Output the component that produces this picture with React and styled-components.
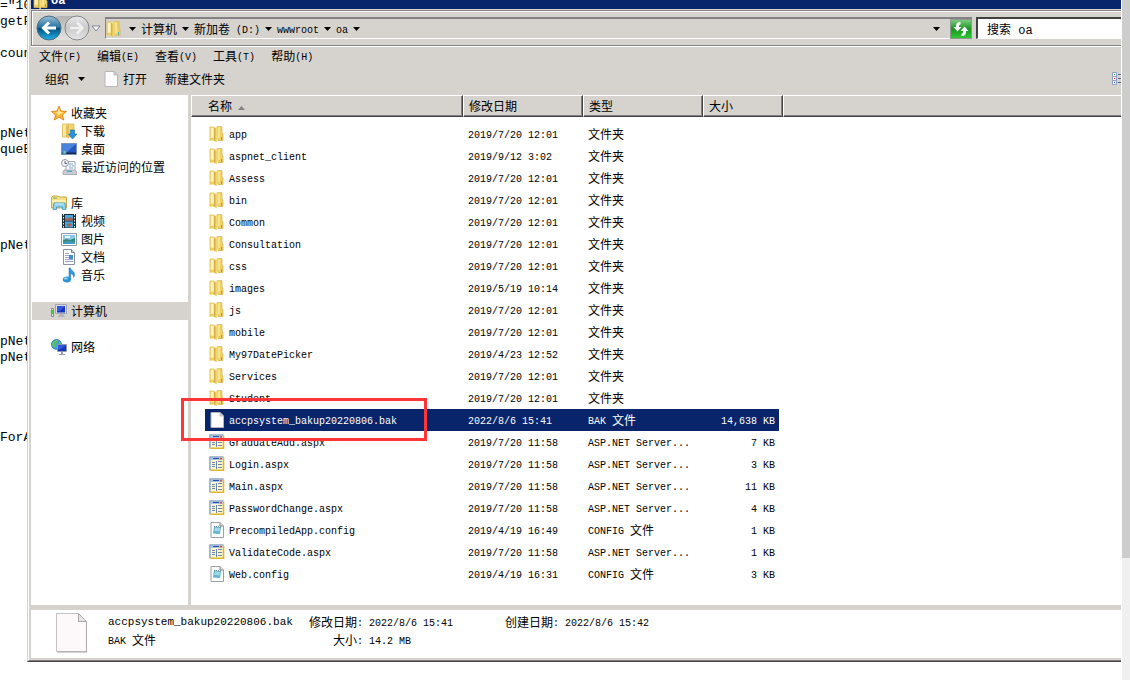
import React from 'react'
import styled, { createGlobalStyle } from 'styled-components';

const files = [
    {name: 'app', date: '2019/7/20 12:01', type: '文件夹', icon: 'folder'},
    {name: 'aspnet_client', date: '2019/9/12 3:02', type: '文件夹', icon: 'folder'},
    {name: 'Assess', date: '2019/7/20 12:01', type: '文件夹', icon: 'folder'},
    {name: 'bin', date: '2019/7/20 12:01', type: '文件夹', icon: 'folder'},
    {name: 'Common', date: '2019/7/20 12:01', type: '文件夹', icon: 'folder'},
    {name: 'Consultation', date: '2019/7/20 12:01', type: '文件夹', icon: 'folder'},
    {name: 'css', date: '2019/7/20 12:01', type: '文件夹', icon: 'folder'},
    {name: 'images', date: '2019/5/19 10:14', type: '文件夹', icon: 'folder'},
    {name: 'js', date: '2019/7/20 12:01', type: '文件夹', icon: 'folder'},
    {name: 'mobile', date: '2019/7/20 12:01', type: '文件夹', icon: 'folder'},
    {name: 'My97DatePicker', date: '2019/4/23 12:52', type: '文件夹', icon: 'folder'},
    {name: 'Services', date: '2019/7/20 12:01', type: '文件夹', icon: 'folder'},
    {name: 'Student', date: '2019/7/20 12:01', type: '文件夹', icon: 'folder'},
    {name: 'accpsystem_bakup20220806.bak', date: '2022/8/6 15:41', type: 'BAK 文件', size: '14,638 KB', icon: 'page', selected: true},
    {name: 'GraduateAdd.aspx', date: '2019/7/20 11:58', type: 'ASP.NET Server...', size: '7 KB', icon: 'aspx'},
    {name: 'Login.aspx', date: '2019/7/20 11:58', type: 'ASP.NET Server...', size: '3 KB', icon: 'aspx'},
    {name: 'Main.aspx', date: '2019/7/20 11:58', type: 'ASP.NET Server...', size: '11 KB', icon: 'aspx'},
    {name: 'PasswordChange.aspx', date: '2019/7/20 11:58', type: 'ASP.NET Server...', size: '4 KB', icon: 'aspx'},
    {name: 'PrecompiledApp.config', date: '2019/4/19 16:49', type: 'CONFIG 文件', size: '1 KB', icon: 'config'},
    {name: 'ValidateCode.aspx', date: '2019/7/20 11:58', type: 'ASP.NET Server...', size: '1 KB', icon: 'aspx'},
    {name: 'Web.config', date: '2019/4/19 16:31', type: 'CONFIG 文件', size: '3 KB', icon: 'config'},
];

const places = [
    [
        {label: '收藏夹', icon: 'star'},
        {label: '下载', icon: 'download', nested: true},
        {label: '桌面', icon: 'desktop', nested: true},
        {label: '最近访问的位置', icon: 'recent', nested: true},
    ],
    [
        {label: '库', icon: 'library'},
        {label: '视频', icon: 'video', nested: true},
        {label: '图片', icon: 'picture', nested: true},
        {label: '文档', icon: 'document', nested: true},
        {label: '音乐', icon: 'music', nested: true},
    ],
    [{label: '计算机', icon: 'computer', current: true}],
    [{label: '网络', icon: 'network'}],
];

const menus = ['文件(F)', '编辑(E)', '查看(V)', '工具(T)', '帮助(H)'];

const crumbs = ['计算机', '新加卷 (D:)', 'wwwroot', 'oa'];

// editor behind the window, one entry per 16px line
const codeLines = [
    '="10', 'getF', '', 'coun', '', '', '', '', 'pNet', 'queE', '', '', '', '', '',
    'pNet', '', '', '', '', '', 'pNet', 'pNet', '', '', '', '', 'ForA',
];

const drawings = {
    folder: (
        <>
            <path d="M1 1h6v13.500H1z" fill="#f8e794"/>
            <path d="M2 2h2v9H2z" fill="#fdf4bf"/>
            <path d="M1 12h5v2.500H1z" fill="#edcf6a"/>
            <path d="M7.500.5H13V7l1 1v6.500H7.500z" fill="#ecd068"/>
            <path d="M9 1h2v11H9z" fill="#f8e48e"/>
            <path d="M5 1.500 7.500 3v13L5 14.500z" fill="#d8ae42"/>
            <path d="M6.500 2 8.500 1v13l-1 2h-1z" fill="#f0d878"/>
            <path d="M1 14.500V1h4M8 .7h5V7l1 1v6.500H9" fill="none" stroke="#dcb850" strokeWidth=".8"/>
            <path d="M12 11h1v3h-1z" fill="#58b4a8"/>
        </>
    ),
    page: (
        <>
            <path d="M2 .5h9l3.500 3.500v11.500H2z" fill="#fffdfd" stroke="#b9b5b9"/>
            <path d="M11 .5V4h3.500z" fill="#dedade" stroke="#aaa6aa" strokeWidth=".7"/>
        </>
    ),
    aspx: (
        <>
            <path d="M1 1h14v13.500H1z" fill="#fff9cf"/>
            <path d="M1 14.500V1h13.500" fill="none" stroke="#8aa4cc" strokeWidth="1.500"/>
            <path d="M1.500 14.300h13V1.500" fill="none" stroke="#e0b62c" strokeWidth="1.600"/>
            <path d="M2 2h11.500v2H2z" fill="#a9c4ee"/>
            <path d="M4 2.500h6" stroke="#2450a8"/>
            <path d="M11 2h2v1.500h-2z" fill="#d55038"/>
            <path d="M3 6.500h3M3 8.500h3M3 10.500h3M9 5.500h4M9 8.500h4M9 11.500h4M7.500 5v8" stroke="#6d86ae"/>
        </>
    ),
    config: (
        <>
            <path d="M2 .5h9l3.500 3.500v11.500H2z" fill="#fff" stroke="#999fa3"/>
            <path d="M11 .5V4h3.500" fill="#ddd" stroke="#858a8d"/>
            <path d="m5 4.500 7 .5-1 7-7-.5z" fill="#63b5cf"/>
            <path d="m6 5.500 5 .3-.5 3.500-5-.3z" fill="#a1dae7"/>
            <path d="m5 4.500 7 .5" stroke="#557f8e" strokeDasharray="1 1"/>
        </>
    ),
    star: (
        <>
            <path d="m8 1 2 5 5.500.5-4 3.500 1.300 5L8 12.300 3.200 15l1.300-5-4-3.500L6 6z" fill="#fdb62e" stroke="#d87916" strokeWidth=".8"/>
            <path d="m8 3 1.300 4 3.500.5L9 9 8 11 6.500 8.500 3 7.500 6.700 7z" fill="#ffe793"/>
        </>
    ),
    download: (
        <>
            <path d="M1.500 1h6v13h-6z" fill="#fae99b" stroke="#d9b652" strokeWidth=".8"/>
            <path d="M7 1h6v13H7z" fill="#efd572" stroke="#d9b652" strokeWidth=".8"/>
            <path d="m5 2 3 1v12l-3-1z" fill="#e2bd55"/>
            <path d="M9.500 7h4v4H16l-4.500 5L7.500 11h2z" fill="#2891e3" stroke="#116bb5" strokeWidth=".6"/>
        </>
    ),
    desktop: (
        <>
            <path d="M.5 2.500h15v11H.5z" fill="#2458be" stroke="#7993bd"/>
            <path d="M1 3h14L6 11H1z" fill="#4a83dc"/>
            <path d="M1 11.500h14V13H1z" fill="#14264d"/>
            <circle cx="3.500" cy="11.500" r="2" fill="#36a9df"/>
            <path d="M3 10.500h1v1H3z" fill="#f7d34c"/>
        </>
    ),
    recent: (
        <>
            <path d="M5 2.500h9v10H5z" fill="#f8f9fb" stroke="#a6abb5"/>
            <path d="M8 5h4M8 7h2M11 7h2M8 9h4" stroke="#83a9d0"/>
            <path d="M3 11h11l2 2v2.500H2V13z" fill="#c8cbd1" stroke="#9599a3" strokeWidth=".7"/>
            <path d="M6 11.500h5V13H6z" fill="#4ea6d1"/>
            <circle cx="4" cy="4" r="3.500" fill="#f3f4f7" stroke="#9298a6"/>
            <path d="M4 2v2.500h2" fill="none" stroke="#5c6478"/>
        </>
    ),
    library: (
        <>
            <path d="M.5 2.500 2 1h5l1 1h7.500v11H.5z" fill="#f4df85" stroke="#cba947"/>
            <path d="M2 3h4" stroke="#68b860"/>
            <path d="M1 5h14v2H1z" fill="#fff2b1"/>
            <path d="M3 8h11l1 6.500h-3.500V12h-6v2.500H2z" fill="#91d3f3" stroke="#3b98ca" strokeWidth=".8"/>
            <path d="M4 9h9" stroke="#d3f1ff"/>
        </>
    ),
    video: (
        <>
            <path d="M1 1h14v14H1z" fill="#1d3037"/>
            <path d="M4 2h8v5.500H4zM4 8.500h8v6H4z" fill="#48a8dd"/>
            <path d="m4 5 3 .5 2-1.500 3 1.500v2H4zM6 11l3-1 2 2-3 2-2-1z" fill="#ad624d"/>
            <path d="M2.500 1v14M13.500 1v14" stroke="#eef4f4" strokeDasharray="1.500 1.500"/>
        </>
    ),
    picture: (
        <>
            <path d="M.5 2.500h15v12H.5z" fill="#fff" stroke="#8e9ba6"/>
            <path d="M2 4h12v9H2z" fill="#85c7ed"/>
            <path d="m2 9 4-1 3 1 5-2v6H2z" fill="#398777"/>
            <path d="m2 11 6-1 6 1v2H2z" fill="#3a9cc3"/>
            <path d="M4 6h5" stroke="#f2fbff" strokeWidth="2"/>
        </>
    ),
    document: (
        <>
            <path d="M2.500.5h8l3 3v12h-11z" fill="#fff" stroke="#8792a3"/>
            <path d="M10.500.5v3h3" fill="#d8dee6" stroke="#748096"/>
            <path d="M4 4.500h4M4 6.500h4M4 8.500h4M4 10.500h8M4 12.500h8" stroke="#9ba4d0"/>
            <path d="M8 6h4v4H8z" fill="#3f93c8"/>
        </>
    ),
    music: (
        <>
            <path d="M8 1h1.500c.5 3 4.500 3 4 7.500l-1 2c.2-3-1.500-3.500-3-4V13H8z" fill="#3098dc" stroke="#1971ad" strokeWidth=".5"/>
            <ellipse cx="5.800" cy="12.500" rx="4" ry="3" fill="#2b93d6"/>
            <ellipse cx="4.800" cy="11.500" rx="2" ry="1" fill="#9ad8f5"/>
        </>
    ),
    computer: (
        <>
            <path d="M4.500 1.500h11v9h-11z" fill="#d9dce3" stroke="#a1a4ae"/>
            <path d="M6 3h8v6.500H6z" fill="#1533bf"/>
            <path d="M6 3h8l-5 5H6z" fill="#3656dc"/>
            <path d="M9 11h3l2 3H7z" fill="#b0b3bc"/>
            <path d="M.5 5.500h2v8h-2z" fill="#e2e3e0" stroke="#8a8f89"/>
            <path d="M1 7h1v4H1z" fill="#4cc63c"/>
        </>
    ),
    network: (
        <>
            <circle cx="5.500" cy="5.500" r="5" fill="#3f9ee0" stroke="#1e6bae" strokeWidth=".7"/>
            <path d="M2 2.500 6 1l1 2-3 2 1 2-2 2-2-3zM8 2l2 2v3L7.500 6z" fill="#59c15f"/>
            <path d="M6.500 5.500h9v7h-9z" fill="#dadce3" stroke="#8f96ad"/>
            <path d="M7 6h8v6H7z" fill="#1635bb"/>
            <path d="M7 6h8l-5 4H7z" fill="#3656dc"/>
            <path d="M10 13h2v2h2v1H8v-1h2z" fill="#999db0"/>
        </>
    ),
};

// Latin runs are set in a half-width mono so that they keep step with the Chinese ones
function Txt({children}) {
    return (
        <Run>
            {children.split(/([\x20-\x7e]+)/).filter(Boolean).map((part, i) => (
                /^[\x20-\x7e]/.test(part) ? <Latin key={i}>{part}</Latin> : part
            ))}
        </Run>
    );
}

function Icon({name}) {
    return <IconSvg viewBox="0 0 16 16" aria-hidden="true">{drawings[name]}</IconSvg>;
}

function Arrow() {
    return (
        <ArrowSvg viewBox="0 0 7 4" aria-hidden="true">
            <path d="M0 0h7L3.500 4z"/>
        </ArrowSvg>
    );
}

function HistoryButtons() {
    return (
        <History>
            <HistoryTray/>
            <RoundButton aria-label="后退">
                <svg width="26" height="26" viewBox="0 0 26 26">
                    <defs>
                        <linearGradient id="back" x1="0" y1="0" x2="0" y2="1">
                            <stop offset="0" stopColor="#9cc0d6"/>
                            <stop offset=".48" stopColor="#24709f"/>
                            <stop offset=".52" stopColor="#04517f"/>
                            <stop offset="1" stopColor="#24b3ea"/>
                        </linearGradient>
                    </defs>
                    <circle cx="13" cy="13" r="12" fill="url(#back)" stroke="#4b6c80"/>
                    <path d="M20 13H8M13 7.500 7.500 13l5.500 5.500" fill="none" stroke="#fff" strokeWidth="3"/>
                </svg>
            </RoundButton>
            <RoundButton aria-label="前进">
                <svg width="26" height="26" viewBox="0 0 26 26">
                    <defs>
                        <linearGradient id="forward" x1="0" y1="0" x2="0" y2="1">
                            <stop offset="0" stopColor="#e9e9e9"/>
                            <stop offset=".5" stopColor="#c9c9c9"/>
                            <stop offset="1" stopColor="#e6e6e6"/>
                        </linearGradient>
                    </defs>
                    <circle cx="13" cy="13" r="12" fill="url(#forward)" stroke="#85878b"/>
                    <path d="M6 13h12M13 7.500l5.500 5.500-5.500 5.500" fill="none" stroke="#f0f0f0" strokeWidth="2.500"/>
                </svg>
            </RoundButton>
            <RecentButton aria-label="最近的页面">
                <svg width="10" height="7" viewBox="0 0 10 7">
                    <path d="M1 1h8L5 6z" fill="#fff" stroke="#7d8798"/>
                </svg>
            </RecentButton>
        </History>
    );
}

function App() {
    return (
        <Page>
            <GlobalStyle/>
            <Editor>
                {codeLines.map((line, i) => <CodeLine key={i}>{line}</CodeLine>)}
            </Editor>
            <Frame>
                <Explorer>
                    <TitleBar>
                        <Icon name="folder"/>
                        <span>oa</span>
                    </TitleBar>
                    <NavBar>
                        <HistoryButtons/>
                        <AddressBox>
                            <Icon name="folder"/>
                            <Crumbs>
                                <Arrow/>
                                {crumbs.map(crumb => (
                                    <React.Fragment key={crumb}>
                                        <PlainButton><Txt>{crumb}</Txt></PlainButton>
                                        <Arrow/>
                                    </React.Fragment>
                                ))}
                            </Crumbs>
                            <PlainButton aria-label="以前的位置"><Arrow/></PlainButton>
                            <RefreshButton aria-label="刷新">
                                <svg width="18" height="18" viewBox="0 0 18 18">
                                    <path d="M8.500 2C5.500 2 4 3.500 4 6v1H1.500L5.500 11.500 9.500 7H7V6c0-1 .5-1.500 1.500-1.500z" fill="#fff"/>
                                    <path d="M9.500 16c3 0 4.500-1.500 4.500-4v-1h2.500l-4-4.500-4 4.500H11v1c0 1-.5 1.500-1.500 1.500z" fill="#fff"/>
                                </svg>
                            </RefreshButton>
                        </AddressBox>
                        <SearchInput type="text" aria-label="搜索" defaultValue="搜索 oa"/>
                    </NavBar>
                    <MenuBar>
                        {menus.map(menu => <PlainButton key={menu}><Txt>{menu}</Txt></PlainButton>)}
                    </MenuBar>
                    <ToolBar>
                        <ToolButton $gap={9}>组织<Arrow/></ToolButton>
                        <ToolButton $gap={4}><Icon name="page"/>打开</ToolButton>
                        <ToolButton>新建文件夹</ToolButton>
                        <ViewButton aria-label="更改您的视图">
                            <svg width="9" height="14" viewBox="0 0 9 14">
                                <path d="M.5.5h4v4h-4zM.5 4.500h4v4h-4zM.5 8.500h4v4h-4z" fill="#fff" stroke="#8fa1c4"/>
                                <path d="M2 2h1v1H2z" fill="#3c9a3c"/>
                                <path d="M2 6h1v1H2z" fill="#e01818"/>
                                <path d="M2 10h1v1H2z" fill="#2858d8"/>
                                <path d="M6 2.500h3M6 6.500h3M6 10.500h3" stroke="#4d6c94"/>
                            </svg>
                        </ViewButton>
                    </ToolBar>
                    <Content>
                        <Sidebar>
                            {places.map(group => (
                                <PlaceGroup key={group[0].label}>
                                    {group.map(place => (
                                        <Place key={place.label} href="#" $nested={place.nested} $current={place.current}>
                                            <Icon name={place.icon}/>
                                            {place.label}
                                        </Place>
                                    ))}
                                </PlaceGroup>
                            ))}
                        </Sidebar>
                        <FilePane>
                            <FileTable>
                                <thead>
                                    <tr>
                                        <HeadCell $width={272} $indent={16}>
                                            名称
                                            <SortMark viewBox="0 0 7 4" aria-hidden="true">
                                                <path d="M0 4h7L3.500 0z"/>
                                            </SortMark>
                                        </HeadCell>
                                        <HeadCell $width={120}>修改日期</HeadCell>
                                        <HeadCell $width={120}>类型</HeadCell>
                                        <HeadCell $width={80}>大小</HeadCell>
                                        <HeadCell/>
                                    </tr>
                                </thead>
                                <FileRows>
                                    {files.map(file => (
                                        <FileRow key={file.name} $selected={file.selected}>
                                            <NameCell>
                                                <FileName>
                                                    <Icon name={file.icon}/>
                                                    <Txt>{file.name}</Txt>
                                                </FileName>
                                                {file.selected && <RedMark/>}
                                            </NameCell>
                                            <Cell><Txt>{file.date}</Txt></Cell>
                                            <Cell><Txt>{file.type}</Txt></Cell>
                                            <SizeCell>{file.size && <Txt>{file.size}</Txt>}</SizeCell>
                                        </FileRow>
                                    ))}
                                </FileRows>
                            </FileTable>
                        </FilePane>
                    </Content>
                    <Details>
                        <BigPage viewBox="0 0 32 40" aria-hidden="true">
                            <path d="M.5.5h22l8 8v30H.5z" fill="#fdf9fa" stroke="#c4bfc4"/>
                            <path d="M22.500.5v8h8z" fill="#e6e2e6" stroke="#aaa6aa"/>
                            <path d="M30.500 9v30H1" fill="none" stroke="#aba7ab"/>
                        </BigPage>
                        <DetailColumn $width={201}>
                            <DetailName>accpsystem_bakup20220806.bak</DetailName>
                            <Txt>BAK 文件</Txt>
                        </DetailColumn>
                        <DetailColumn $width={60} $end>
                            <Txt>修改日期: </Txt>
                            <Txt>大小: </Txt>
                        </DetailColumn>
                        <DetailColumn $width={136}>
                            <Txt>2022/8/6 15:41</Txt>
                            <Txt>14.2 MB</Txt>
                        </DetailColumn>
                        <DetailColumn $width={160}>
                            <Txt>创建日期: 2022/8/6 15:42</Txt>
                        </DetailColumn>
                    </Details>
                </Explorer>
            </Frame>
            <ScrollTrack>
                <ScrollThumb/>
            </ScrollTrack>
        </Page>
    )
}

export default App;

const GlobalStyle= createGlobalStyle`
    * {
        box-sizing: border-box;
    }

    body {
        margin: 0;
        background: white;
        color: black;
        font: 12px/18px "Noto Sans CJK SC", sans-serif;
    }

    button {
        padding: 0;
        border: 0;
        background: none;
        color: inherit;
        font: inherit;
    }

    svg {
        display: block;
        flex-shrink: 0;
    }
`;

const Page= styled.div`
    display: flex;
    height: 100vh;
    overflow: hidden;
`;

const Editor= styled.div`
    width: 27px;
    flex-shrink: 0;
    margin-top: -2px;
    overflow: hidden;
`;

const CodeLine= styled.div`
    height: 16px;
    font: 13px/16px "Liberation Mono", monospace;
`;

const Frame= styled.div`
    display: flex;
    flex: 1;
    min-width: 0;
    margin-bottom: 18px;
    border-left: 1px solid #d6d3ce;
    border-bottom: 1px solid #424142;
`;

const Explorer= styled.div`
    display: flex;
    flex-direction: column;
    flex: 1;
    min-width: 0;
    padding: 0 0 2px 2px;
    border-left: 1px solid white;
    border-bottom: 1px solid #848284;
    background: #d6d3ce;
`;

const Run= styled.span`
    white-space: pre;
`;

const Latin= styled.span`
    font-family: "Liberation Mono", monospace;
    font-size: 10px;
    line-height: 1;
    vertical-align: 1px;
`;

const IconSvg= styled.svg`
    width: 16px;
    height: 16px;
`;

const ArrowSvg= styled.svg`
    width: 7px;
    height: 4px;
`;

const TitleBar= styled.div`
    display: flex;
    align-items: flex-end;
    gap: 2px;
    height: 9px;
    margin-bottom: 1px;
    padding-left: 2px;
    overflow: hidden;
    background: #08246b;
    color: white;
    font: bold 12px/16px "Liberation Mono", monospace;
`;

const NavBar= styled.div`
    display: flex;
    align-items: center;
    height: 36px;
    padding-left: 4px;
    border: solid #848284;
    border-width: 1px 0 1px 1px;
    box-shadow: inset 1px 1px white, 0 1px white;
`;

const History= styled.div`
    position: relative;
    display: flex;
    align-items: center;
    gap: 2px;
    width: 69px;
`;

const HistoryTray= styled.div`
    position: absolute;
    top: 1px;
    left: 12px;
    width: 42px;
    height: 24px;
    border-radius: 12px;
    background: linear-gradient(#b5b3b0, #e4e2df);
`;

const RoundButton= styled.button`
    position: relative;
    width: 26px;
    height: 26px;
`;

const RecentButton= styled.button`
    margin-left: -1px;
`;

const AddressBox= styled.div`
    display: flex;
    align-items: center;
    flex: 1;
    height: 22px;
    border: solid #848284;
    border-width: 2px 0 0 1px;
    border-bottom: 1px solid white;
`;

const Crumbs= styled.div`
    display: flex;
    align-items: center;
    flex: 1;
    gap: 5px;
    padding-left: 7px;
`;

const PlainButton= styled.button`
    white-space: nowrap;
`;

const RefreshButton= styled.button`
    width: 22px;
    height: 20px;
    margin-left: 10px;
    padding: 0 1px;
    border: 1px solid #8d9a8d;
    background: linear-gradient(#7cca7c, #17961f 50%, #2fc637);
`;

const SearchInput= styled.input`
    width: 145px;
    height: 22px;
    margin-left: 4px;
    padding: 0 0 0 9px;
    border: solid #424142;
    border-width: 2px 0 0 2px;
    border-bottom: 1px solid white;
    border-radius: 0;
    background: white;
    color: black;
    font: 12px/18px "Liberation Mono", "Noto Sans CJK SC", monospace;
`;

const MenuBar= styled.div`
    display: flex;
    align-items: center;
    gap: 16px;
    height: 19px;
    padding-left: 8px;
`;

const ToolBar= styled.div`
    display: flex;
    align-items: center;
    gap: 18px;
    height: 30px;
    padding: 0 0 2px 14px;
`;

const ToolButton= styled.button`
    display: flex;
    align-items: center;
    gap: ${props => props.$gap || 0}px;
    white-space: nowrap;
`;

const ViewButton= styled.button`
    margin-left: auto;
`;

const Content= styled.div`
    display: flex;
    flex: 1;
    min-height: 0;
`;

const Sidebar= styled.nav`
    display: flex;
    flex-direction: column;
    gap: 18px;
    width: 157px;
    flex-shrink: 0;
    padding: 9px 0 0 1px;
    background: white;
`;

const PlaceGroup= styled.div`
    display: flex;
    flex-direction: column;
`;

const Place= styled.a`
    display: flex;
    align-items: center;
    gap: 4px;
    height: 18px;
    padding-left: ${props => props.$nested ? 29 : 19}px;
    background: ${props => props.$current ? '#d6d3ce' : 'transparent'};
    color: black;
    text-decoration: none;
`;

const FilePane= styled.main`
    flex: 1;
    min-width: 0;
    margin-left: 3px;
    background: white;
`;

const FileTable= styled.table`
    width: 100%;
    table-layout: fixed;
    border-spacing: 0;
`;

const HeadCell= styled.th`
    width: ${props => props.$width ? `${props.$width}px` : 'auto'};
    height: 22px;
    padding: 0 0 0 ${props => props.$indent || 5}px;
    border: 1px solid white;
    border-right: ${props => props.$width ? '1px solid #424142' : '0'};
    border-bottom-color: #424142;
    box-shadow: inset ${props => props.$width ? '-1px' : '0'} -1px #848284;
    background: #d6d3ce;
    font-weight: normal;
    text-align: left;
`;

const SortMark= styled.svg`
    display: inline-block;
    width: 7px;
    height: 4px;
    margin-left: 6px;
    vertical-align: middle;
    fill: #848284;
`;

const FileRows= styled.tbody`
    &::before {
        content: '';
        display: table-row;
        height: 6px;
    }
`;

const Cell= styled.td`
    height: 22px;
    padding: 0 0 0 5px;
    background-clip: padding-box;
`;

const NameCell= styled(Cell)`
    position: relative;
    padding-left: 4px;
    border-left: 14px solid transparent;
`;

const SizeCell= styled(Cell)`
    padding-right: 4px;
    border-right: 4px solid transparent;
    text-align: right;
`;

const FileRow= styled.tr`
    color: ${props => props.$selected ? 'white' : 'black'};

    > td {
        background-color: ${props => props.$selected ? '#08246b' : 'transparent'};
    }
`;

const FileName= styled.div`
    display: flex;
    align-items: center;
    gap: 4px;
`;

const RedMark= styled.div`
    position: absolute;
    top: -11px;
    left: -24px;
    z-index: 1;
    width: 246px;
    height: 43px;
    border: 3px solid #ff3538;
`;

const Details= styled.footer`
    display: flex;
    height: 48px;
    margin-top: 5px;
    padding: 3px 0 0 25px;
    background: white;
`;

const BigPage= styled.svg`
    width: 32px;
    height: 40px;
    margin-right: 20px;
`;

const DetailColumn= styled.div`
    display: flex;
    flex-direction: column;
    align-items: ${props => props.$end ? 'flex-end' : 'flex-start'};
    width: ${props => props.$width}px;
`;

const DetailName= styled.span`
    font-family: "Liberation Mono", monospace;
    font-size: 11px;
`;

const ScrollTrack= styled.div`
    width: 8px;
    flex-shrink: 0;
    margin-left: 1px;
    background: #f0f0f0;
`;

const ScrollThumb= styled.div`
    height: 82%;
    background: #cdcdcd;
`;
